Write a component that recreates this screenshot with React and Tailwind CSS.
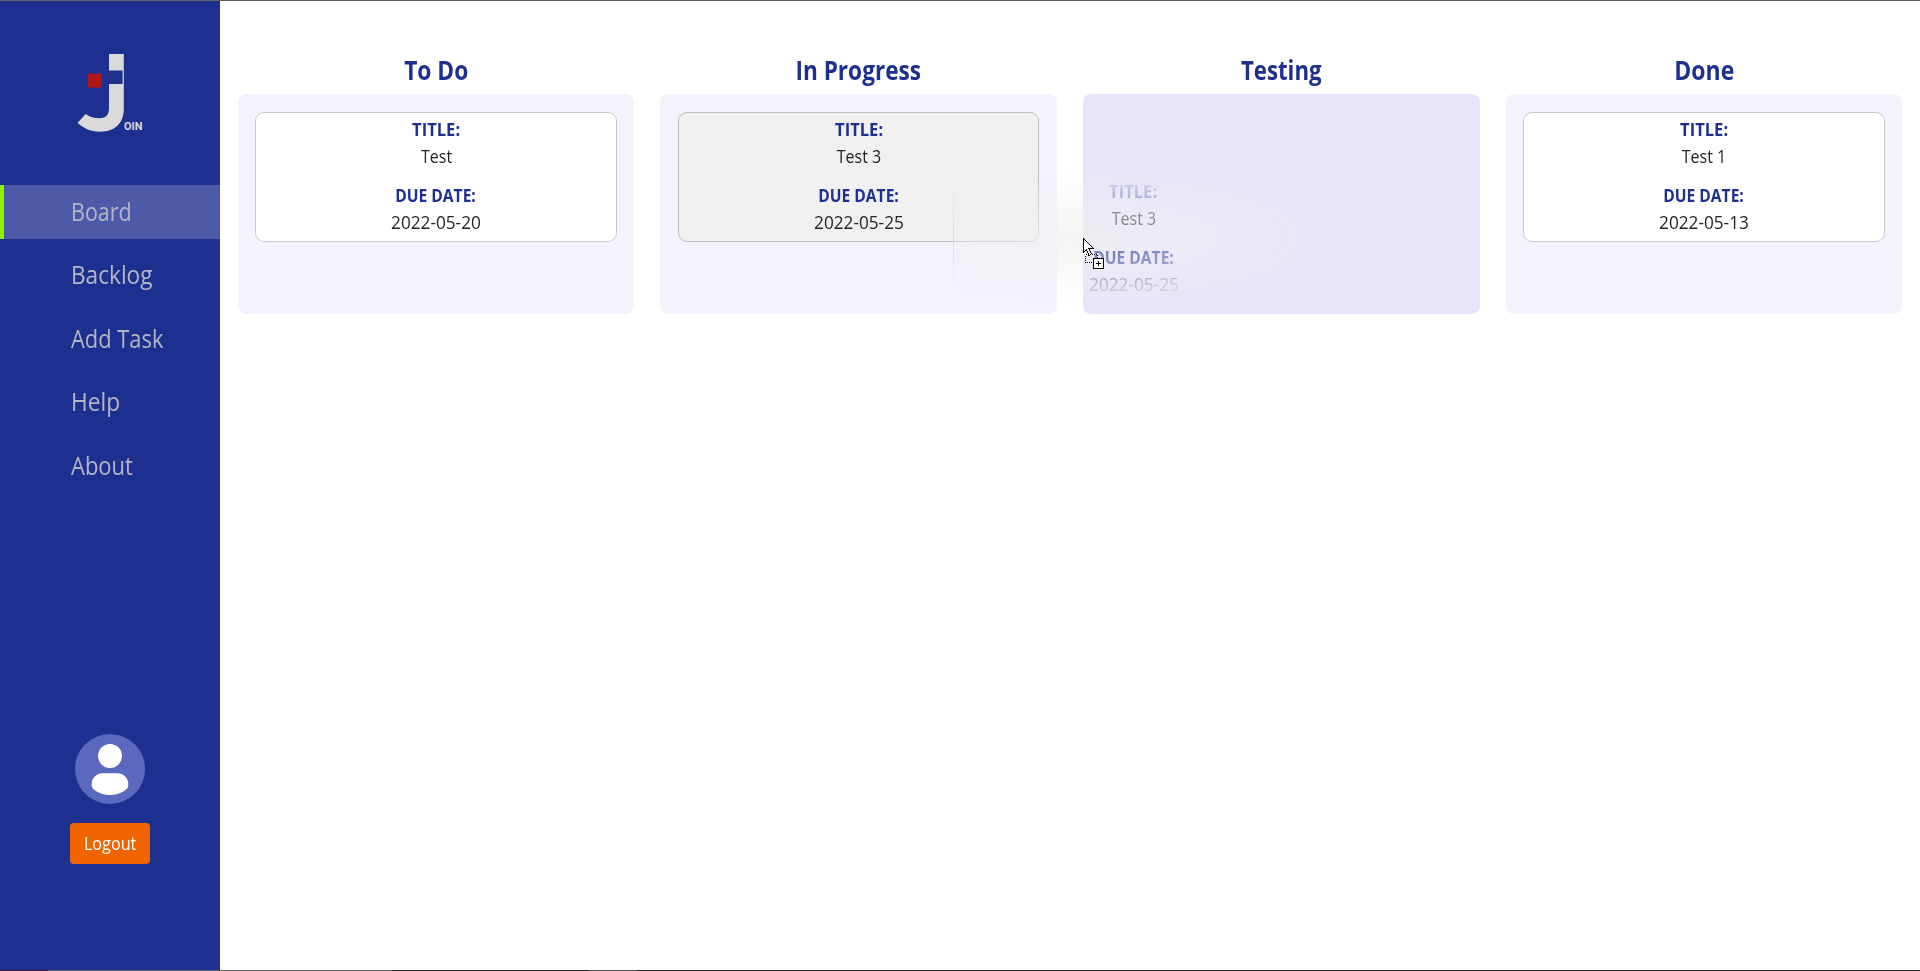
const navItems = [
  { label: "Board", active: true, width: "scale-x-[0.86]" },
  { label: "Backlog", width: "scale-x-[0.905]" },
  { label: "Add Task", width: "scale-x-[0.875]" },
  { label: "Help", width: "scale-x-[0.91]" },
  { label: "About", width: "scale-x-[0.88]" },
];

const columns = [
  { name: "To Do", width: "scale-x-[0.875]", task: { title: "Test", due: "2022-05-20" } },
  { name: "In Progress", width: "scale-x-[0.87]", task: { title: "Test 3", due: "2022-05-25", dragged: true } },
  { name: "Testing", width: "scale-x-[0.855]", over: true },
  { name: "Done", width: "scale-x-[0.885]", task: { title: "Test 1", due: "2022-05-13" } },
];

function Logo() {
  return (
    <svg width="70" height="80" viewBox="76 53 70 80" className="block">
      <path
        d="M109 54H123.8V109C123.8 124 114 131.7 100 131.7C90 131.7 83 128 77.6 122.8L85.7 114C90 117 94 118.2 99.5 118.2C106 118.2 109 115 109 108V84H122.6V70.4H109Z"
        fill="#dadada"
      />
      <rect x="88" y="73.6" width="13.8" height="14" fill="#b01818" />
      <text
        x="124"
        y="129.7"
        fontSize="11"
        fontWeight="700"
        textLength="18.4"
        lengthAdjust="spacingAndGlyphs"
        fontFamily="Roboto, sans-serif"
        fill="#dadada"
      >
        OIN
      </text>
    </svg>
  );
}

function Avatar() {
  return (
    <svg width="70" height="70" viewBox="0 0 70 70" className="block">
      <circle cx="35" cy="35" r="35" fill="#5a69be" />
      <circle cx="35" cy="22" r="12" fill="#fff" />
      <path
        d="M28 39.2H42C48.5 39.2 53.3 44 53.3 50C53.3 52 53.2 53.2 52.3 54.2C48 58.6 42 61 35 61C28 61 22 58.6 17.7 54.2C16.8 53.2 16.6 52 16.6 50C16.6 44 21.5 39.2 28 39.2Z"
        fill="#fff"
      />
    </svg>
  );
}

function Card({ title, due, dragged }) {
  return (
    <div
      className={`flex h-[130px] flex-col items-center rounded-[9px] border pt-[3px] text-[18px] leading-[27px] ${
        dragged ? "border-[#bfbfc2] bg-[#f0f0f0]" : "border-[#cacaca] bg-white"
      }`}
    >
      <span className="scale-x-[0.92] font-bold text-[#1e308f]">TITLE:</span>
      <span className="scale-x-[0.89] text-[#212529]">{title}</span>
      <span className="mt-3 scale-x-[0.865] font-bold text-[#1e308f]">DUE DATE:</span>
      <span className="scale-x-[0.955] text-[#212529]">{due}</span>
    </div>
  );
}

function Cursor() {
  return (
    <svg width="22" height="32" viewBox="0 0 22 32" className="block" shapeRendering="crispEdges">
      <path
        d="M0.5 0.5V14.5L3.5 11.5L6 17.5L8.5 16.5L6 10.5H10.5Z"
        fill="#fff"
        stroke="#000"
        strokeWidth="1"
      />
      <path d="M2.5 16.5H14.5V24.5H2.5Z" fill="none" stroke="#fff" />
      <path d="M2.5 16.5H14.5V24.5H2.5Z" fill="none" stroke="#000" strokeDasharray="1 1" />
      <rect x="10.5" y="20.5" width="10" height="10" fill="#fff" stroke="#000" />
      <path d="M13 25.5H18M15.5 23V28" stroke="#000" />
    </svg>
  );
}

export default function App() {
  return (
    <div className="relative flex h-[971px] w-[1920px] flex-col overflow-hidden bg-white font-['Open_Sans',sans-serif]">
      <div className="h-px shrink-0 bg-[#606060]" />
      <div className="flex min-h-0 flex-1">
        <aside className="flex w-[220px] shrink-0 flex-col bg-[#1e308f]">
          <div className="pt-[52px] pl-[76px]">
            <Logo />
          </div>
          <nav className="mt-[52px] flex flex-col gap-[9.5px]">
            {navItems.map((item) => (
              <a
                key={item.label}
                className={`flex h-[54px] items-center border-l-4 pb-[2px] pl-[67px] text-[25px] leading-[37px] text-[#b4b5c6] ${
                  item.active ? "border-[#8ff000] bg-[#4d5aa7]" : "border-transparent"
                }`}
              >
                <span className={`origin-left ${item.width}`}>{item.label}</span>
              </a>
            ))}
          </nav>
          <div className="mt-auto flex flex-col items-center pb-[106px]">
            <Avatar />
            <button className="mt-[19px] flex h-[41px] w-20 items-center justify-center rounded-[4px] bg-[#f06400] pb-px text-[18px] leading-[27px] text-white">
              <span className="scale-x-[0.9]">Logout</span>
            </button>
          </div>
        </aside>
        <main className="grid flex-1 grid-cols-4 content-start gap-x-[26.2px] px-[17.8px] pt-[48px]">
          {columns.map((column) => (
            <section key={column.name} className="flex flex-col">
              <h2
                className={`h-[45px] text-center text-[26px] leading-[42px] font-bold text-[#1e308f] ${column.width}`}
              >
                {column.name}
              </h2>
              <div
                className={`h-[220px] rounded-[8px] px-[17.6px] py-[18px] ${
                  column.over ? "bg-[#e8e5f8]" : "bg-[#f4f2fc]"
                }`}
              >
                {column.task && <Card {...column.task} />}
              </div>
            </section>
          ))}
        </main>
      </div>
      <div className="flex h-px shrink-0 bg-[#222222]">
        <div className="w-12 bg-[#40202c]" />
        <div className="w-[344px] bg-[#606060]" />
        <div className="w-[197px]" />
        <div className="w-12 bg-[#505050]" />
      </div>

      {/* Floating preview of the dragged card, fading out from the pointer */}
      <div className="pointer-events-none absolute top-[174px] left-[953px] w-[361px] [mask-image:radial-gradient(ellipse_235px_66px_at_130px_64px,rgba(0,0,0,0.66)_0%,rgba(0,0,0,0.56)_25%,rgba(0,0,0,0.4)_50%,rgba(0,0,0,0.2)_75%,rgba(0,0,0,0.08)_90%,transparent_100%)]">
        <Card title="Test 3" due="2022-05-25" dragged />
      </div>
      <div className="pointer-events-none absolute top-[238px] left-[1083px]">
        <Cursor />
      </div>
    </div>
  );
}
